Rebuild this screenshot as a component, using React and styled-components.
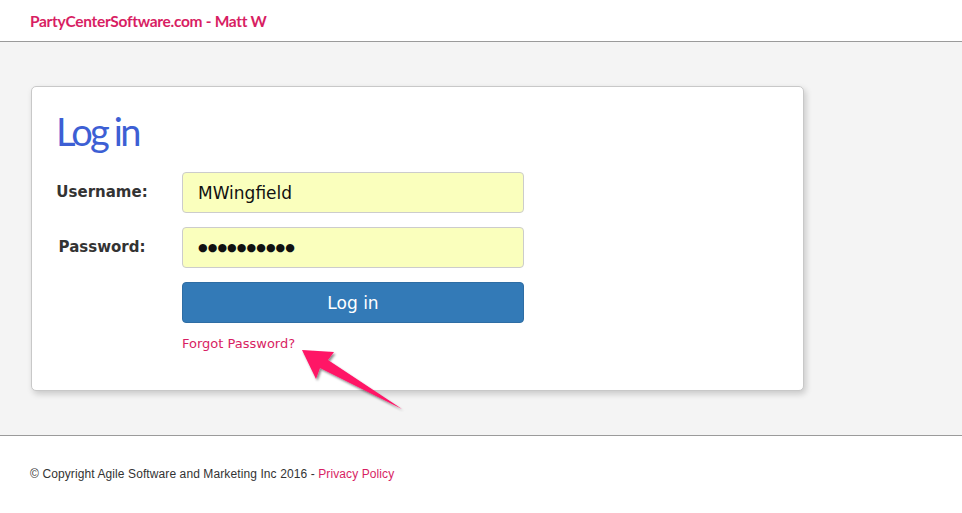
import React from 'react';
import styled, { createGlobalStyle } from 'styled-components';

const GlobalStyle = createGlobalStyle`
  html, body {
    margin: 0;
    padding: 0;
    background: #fff;
  }
`;

function App() {
  return (
    <Page>
      <GlobalStyle />
      <Header>
        <Brand>PartyCenterSoftware.com - Matt W</Brand>
      </Header>
      <Main>
        <Card>
          <Title>Log in</Title>
          <Row>
            <Label>Username:</Label>
            <Field>MWingfield</Field>
          </Row>
          <Row>
            <Label>Password:</Label>
            <Field secret>●●●●●●●●●●</Field>
          </Row>
          <Row>
            <Spacer />
            <Button>Log in</Button>
          </Row>
          <Row>
            <Spacer />
            <Forgot href="#">Forgot Password?</Forgot>
          </Row>
        </Card>
        {/* 스크린샷 위에 그려진 화살표 */}
        <Arrow width="120" height="80" viewBox="0 0 120 80">
          <defs>
            <filter id="sh" x="-20%" y="-20%" width="150%" height="150%">
              <feDropShadow dx="1.5" dy="2" stdDeviation="1.2" floodColor="#000" floodOpacity="0.45" />
            </filter>
          </defs>
          <polygon
            points="2,2 34,4 28,12 102,61 20,20 16,31"
            fill="#ff1466"
            filter="url(#sh)"
          />
        </Arrow>
      </Main>
      <Footer>
        © Copyright Agile Software and Marketing Inc 2016 - <FooterLink href="#">Privacy Policy</FooterLink>
      </Footer>
    </Page>
  );
}

const Page = styled.div`
  width: 100%;
  min-height: 513px;
  background: #fff;
`;

const Header = styled.div`
  height: 42px;
  border-bottom: 1px solid #9a9a9a;
  display: flex;
  align-items: center;
  padding-left: 30px;
  box-sizing: border-box;
`;

const Brand = styled.div`
  font-family: Lato, 'Open Sans', sans-serif;
  font-weight: 700;
  font-size: 15.5px;
  letter-spacing: -0.3px;
  color: #d81e63;
`;

const Main = styled.div`
  position: relative;
  background: #f4f4f4;
  padding: 44px 0 44px 31px;
  border-bottom: 1px solid #9a9a9a;
`;

const Card = styled.div`
  width: 773px;
  height: 305px;
  box-sizing: border-box;
  background: #fff;
  border: 1px solid #c8c8c8;
  border-radius: 5px;
  box-shadow: 2px 3px 6px rgba(0, 0, 0, 0.18);
  padding: 21px 24px 0 24px;
`;

const Title = styled.h1`
  margin: 0 0 18px 0;
  font-family: Lato, sans-serif;
  font-weight: 400;
  font-size: 38px;
  line-height: 46px;
  letter-spacing: -2.8px;
  color: #3d5fd4;
`;

const Row = styled.div`
  display: flex;
  align-items: center;
  margin-bottom: 14px;
`;

const Label = styled.div`
  width: 92px;
  margin-right: 34px;
  text-align: center;
  font-family: 'DejaVu Sans', Verdana, sans-serif;
  font-weight: 700;
  font-size: 15px;
  color: #333;
  padding-bottom: 1px;
`;

const Spacer = styled.div`
  width: 126px;
`;

const Field = styled.div`
  width: 342px;
  height: 41px;
  box-sizing: border-box;
  background: #faffbd;
  border: 1px solid #ccc;
  border-radius: 4px;
  display: flex;
  align-items: center;
  padding-left: 15px;
  font-family: 'DejaVu Sans', Verdana, sans-serif;
  font-size: ${(p) => (p.secret ? '11px' : '17px')};
  letter-spacing: ${(p) => (p.secret ? '0.1px' : '0')};
  color: #111;
`;

const Button = styled.button`
  width: 342px;
  height: 41px;
  background: #337ab7;
  border: 1px solid #2e6da4;
  border-radius: 4px;
  color: #fff;
  font-family: 'DejaVu Sans', Verdana, sans-serif;
  font-size: 17px;
  cursor: pointer;
`;

const Forgot = styled.a`
  font-family: 'DejaVu Sans', Verdana, sans-serif;
  font-size: 13px;
  color: #d81e63;
  text-decoration: none;
  margin-top: -1px;
`;

const Arrow = styled.svg`
  position: absolute;
  left: 300px;
  top: 306px;
`;

const Footer = styled.div`
  padding: 31px 0 0 30px;
  font-family: 'Liberation Sans', Arial, sans-serif;
  font-size: 12px;
  letter-spacing: 0.1px;
  color: #333;
`;

const FooterLink = styled.a`
  color: #d81e63;
  text-decoration: none;
`;

export default App;
